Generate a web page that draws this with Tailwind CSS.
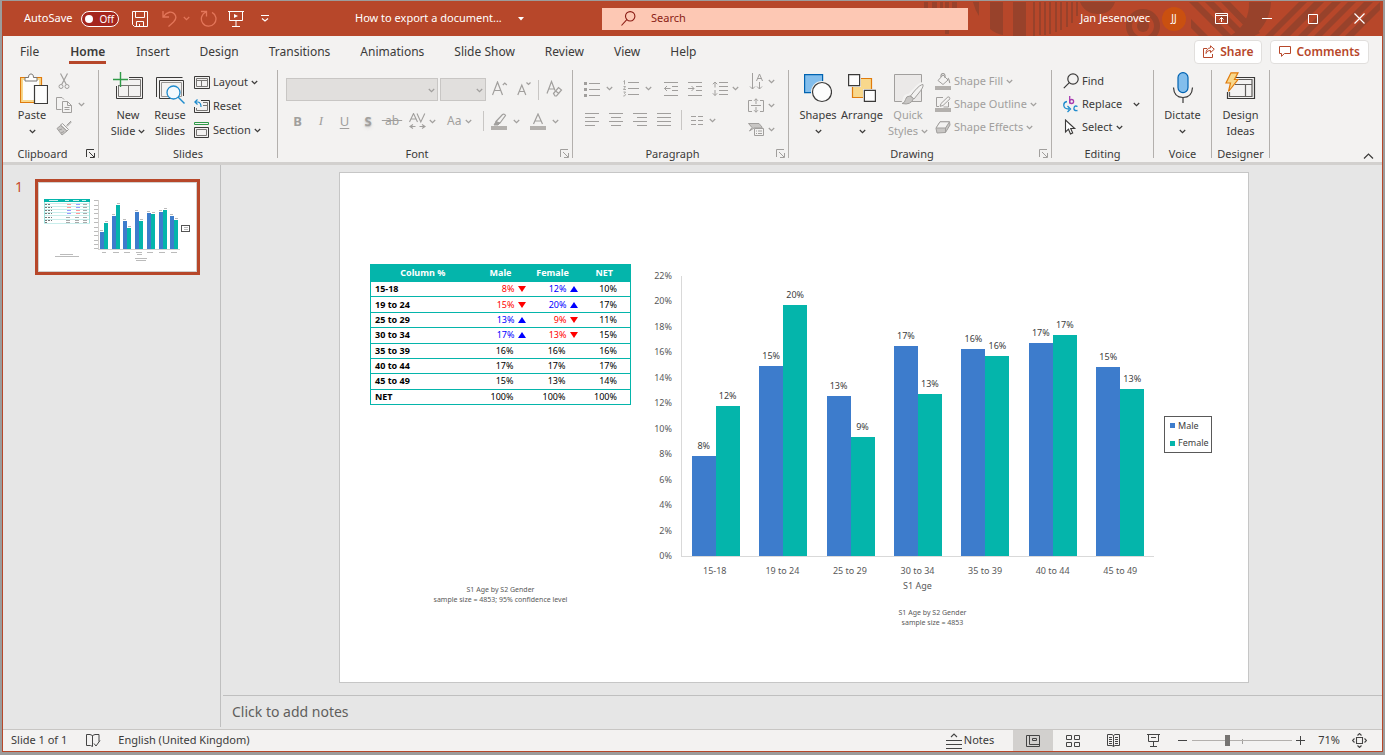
<!DOCTYPE html>
<html lang="en">

<head>
    <meta charset="UTF-8" />
    <meta name="viewport" content="width=device-width, initial-scale=1" />
    <title>How to export a document... - PowerPoint</title>
    <script src="https://cdn.jsdelivr.net/npm/@tailwindcss/browser@4"></script>
</head>

<body class="h-screen overflow-hidden bg-[#9c9c9c] pt-px px-[2px] pb-[3px] flex flex-col font-['Noto_Sans',sans-serif] text-[11px] text-[#3b3a39]">

    <!-- shared icons -->
    <svg class="hidden">
        <symbol id="chev" viewBox="0 0 7 5"><path d="M.8 1l2.7 2.7L6.2 1" fill="none" stroke="currentColor" stroke-width="1.2" /></symbol>
        <symbol id="launcher" viewBox="0 0 9 9"><path d="M.5 8V.5H8M3 3l5 5M8.500 4v4.500H4" fill="none" stroke="currentColor" /></symbol>
    </svg>

    <div class="flex-1 min-h-0 flex flex-col border-x border-b border-[#b7472a] bg-[#f3f2f1]">

        <!-- title bar -->
        <header class="relative h-[35px] shrink-0 flex items-center bg-[#b7472a] text-white">
            <svg class="absolute right-0 top-0" width="458" height="35" viewBox="0 0 458 35" fill="#98422b">
                <path d="M0 1h4v8H0zM8 1h5v8H8zM16 1h3v8h-3zM21 1h4v32h-4zM28 1h5v8h-5zM49 1h6v14q-4-6-6-14zM66 1h13v33q-7-1-13-6zM89 1h13v34H89zM109 1h2v34h-2zM115 1h2v33h-2zM120 1h2v33h-2zM125 1h2v32h-2zM131 1h2v30h-2zM136 1h2v28h-2zM142 1h2v25h-2zM147 1h2v21h-2zM152 1h2v14h-2z" />
                <path d="M156 1h35q-4 12-17 12T156 1z" />
                <path d="M265 1h9l34 34h-9zM281 1h9l34 34h-9zM297 1h9l30 31-6 3zM267 18l17 17h-9l-8-8z" />
                <path d="M325 1h22q-1 20-17 34h-24q20-12 19-34z" />
                <path d="M375 1h8l-34 34h-8zM390 1h10l-34 34h-10zM408 1h9l-34 34h-9zM424 1h8l-34 34h-8zM440 1h9l-34 34h-9zM456 1v8l-26 26h-9z" />
                <circle cx="219" cy="25" r="14" fill="none" stroke="#98422b" stroke-width="6" />
                <circle cx="219" cy="25" r="6" />
            </svg>

            <div class="relative w-[352px] shrink-0 flex items-center pl-[21px]">
                <label class="flex items-center gap-[9px]">
                    <span>AutoSave</span>
                    <input type="checkbox" role="switch" class="sr-only" />
                    <span class="w-[38px] h-4 rounded-full border border-white bg-[#a5261d] flex items-center pl-[3px] gap-[6px] text-[10px] leading-none">
                        <span class="size-2 rounded-full bg-white"></span>Off
                    </span>
                </label>
                <button class="ml-[13px]" aria-label="Save">
                    <svg width="16" height="16" viewBox="0 0 16 16" fill="none" stroke="#fff"><path d="M.5.5h15v15H2.500l-2-2zM3.500.5v6h9v-6M4.500 15.500v-5h7v5M7.500 15v-2" /></svg>
                </button>
                <button class="ml-[14px] flex items-center gap-[6px] text-[#e3765a]" aria-label="Undo">
                    <svg width="15" height="17" viewBox="0 0 15 17" fill="none" stroke="currentColor" stroke-width="1.300"><path d="M1 1v6h6M1.500 6.500C5 1.500 10 1 12.500 4s1 6-1 8l-5 4.500" /></svg>
                    <svg width="7" height="5"><use href="#chev" /></svg>
                </button>
                <button class="ml-[10px] text-[#e3765a]" aria-label="Redo">
                    <svg width="17" height="17" viewBox="0 0 17 17" fill="none" stroke="currentColor" stroke-width="1.300"><path d="M1 1.500h5.500v5M6 2A7.300 7.300 0 1 0 12 2.300" /></svg>
                </button>
                <button class="ml-[11px]" aria-label="Start from beginning">
                    <svg width="16" height="16" viewBox="0 0 16 16" fill="none" stroke="#fff"><path d="M0 .5h16M1.500 1v8.500h13V1M8 10v5M4 15.500h8" /><path d="M6 3l4 2-4 2z" fill="#fff" stroke="none" /></svg>
                </button>
                <button class="ml-[17px]" aria-label="Customize toolbar">
                    <svg width="8" height="7" viewBox="0 0 8 7" fill="none" stroke="#fff"><path d="M0 .5h8M1 3.500l3 2.500 3-2.500" stroke-width="1.200" /></svg>
                </button>
            </div>

            <button class="relative w-[247px] shrink-0 flex items-center gap-[16px]">
                How to export a document...
                <svg width="6" height="4" viewBox="0 0 6 4" fill="#fff"><path d="M0 0h6L3 3.500z" /></svg>
            </button>

            <div class="relative flex-1 h-[22px] bg-[#fdc8b4] flex items-center pl-[19px] gap-[15px] text-[#8a1c14]">
                <svg width="15" height="15" viewBox="0 0 15 15" fill="none" stroke="currentColor" stroke-width="1.100"><circle cx="9.200" cy="5.300" r="4.700" /><path d="M5.800 8.700L.5 14.500" /></svg>
                <input type="text" aria-label="Search" placeholder="Search" class="flex-1 min-w-0 bg-transparent outline-none placeholder:text-[#8a1c14]" />
            </div>

            <div class="relative w-[414px] shrink-0 flex items-center justify-end">
                <span>Jan Jesenovec</span>
                <span class="mx-[12px] size-6 rounded-full bg-[#ca5010] flex items-center justify-center text-[10px]">JJ</span>
                <button class="w-[46px] flex justify-center" aria-label="Ribbon display options">
                    <svg width="13" height="11" viewBox="0 0 13 11" fill="none" stroke="#fff"><path d="M.5.5h12v10H.5zM1 2.500h11M6.500 9V4.500M4.500 6.500l2-2 2 2" /></svg>
                </button>
                <button class="w-[46px] flex justify-center" aria-label="Minimize">
                    <svg width="10" height="11" viewBox="0 0 10 11" stroke="#fff"><path d="M0 5.500h10" /></svg>
                </button>
                <button class="w-[46px] flex justify-center" aria-label="Maximize">
                    <svg width="10" height="10" viewBox="0 0 10 10" stroke="#fff" fill="none"><path d="M.5.5h9v9h-9z" /></svg>
                </button>
                <button class="w-[46px] flex justify-center" aria-label="Close">
                    <svg width="11" height="11" viewBox="0 0 11 11" stroke="#fff" fill="none" stroke-width="1.200"><path d="M.5.5l10 10M10.500.5l-10 10" /></svg>
                </button>
            </div>
        </header>

        <!-- tabs -->
        <nav class="h-[31px] shrink-0 flex items-center justify-between pl-[17px] pr-[13px] text-xs">
            <div class="flex gap-[30px] leading-5">
                <a href="#">File</a>
                <a href="#" class="relative px-px font-semibold">Home<span class="absolute inset-x-0 bottom-[-2px] h-[3px] bg-[#b7472a]"></span></a>
                <a href="#">Insert</a>
                <a href="#">Design</a>
                <a href="#">Transitions</a>
                <a href="#">Animations</a>
                <a href="#">Slide Show</a>
                <a href="#">Review</a>
                <a href="#">View</a>
                <a href="#">Help</a>
            </div>
            <div class="flex gap-2 font-semibold text-[#b7472a]">
                <button class="h-6 px-2 flex items-center gap-[5px] bg-white border border-[#e1dfdd] rounded-sm">
                    <svg width="12" height="13" viewBox="0 0 12 13" fill="none" stroke="currentColor"><path d="M4 3.500H.5v9h9V9M7.500.8l3.800 3.400-3.800 3.400V5.500C5 5.500 4 6.500 3 8.500c0-3 1.500-5.500 4.500-5.700z" /></svg>
                    Share
                </button>
                <button class="h-6 px-2 flex items-center gap-[5px] bg-white border border-[#e1dfdd] rounded-sm">
                    <svg width="12" height="11" viewBox="0 0 12 11" fill="none" stroke="currentColor"><path d="M.5.500h11v7H5.500l-3 2.800V7.500h-2z" /></svg>
                    Comments
                </button>
            </div>
        </nav>

        <!-- ribbon -->
        <div class="relative h-[95px] shrink-0 pt-[3px] pb-1 flex leading-4">

            <section class="relative w-[96px] shrink-0 border-r border-[#b3b0ad] flex flex-col justify-between">
                <div class="flex pl-[12px] gap-[7px]">
                    <button class="w-[34px] flex flex-col items-center">
                        <span class="h-[37px] flex items-center pl-[4px]">
                            <svg width="28" height="31" viewBox="0 0 28 31" fill="none"><path d="M.5 4.500h21v25H.5z" fill="#f8d88c" stroke="#e07b0c" stroke-width="1.200" /><path d="M3 7h16v20H3z" fill="#fdfdfd" /><path d="M5 8V4.500h3.500C8.500 2 9.500 1 11 1s2.500 1 2.500 3.500H17V8z" fill="#fdfdfd" stroke="#797775" /><path d="M14.500 12.500h13v18h-13z" fill="#fdfdfd" stroke="#3b3a39" stroke-width="1.200" /></svg>
                        </span>
                        Paste
                        <span class="h-4 flex items-center"><svg width="7" height="5"><use href="#chev" /></svg></span>
                    </button>
                    <div class="flex flex-col text-[#a19f9d]">
                        <button class="h-[23px] w-4 flex items-center justify-center" aria-label="Cut">
                            <svg width="12" height="17" viewBox="0 0 12 17" fill="none" stroke="currentColor"><path d="M2.500.5l5.800 11M9.500.5L3.700 11.500" stroke-width="1.200" /><circle cx="3" cy="13.500" r="2" /><circle cx="9" cy="13.500" r="2" /></svg>
                        </button>
                        <button class="h-[23px] flex items-center gap-[6px]" aria-label="Copy">
                            <svg width="16" height="16" viewBox="0 0 16 16" fill="none" stroke="currentColor"><path d="M5.500 12.500h-5v-12h5.500l2 2M6.500 4.500h5l4 4v7h-9zM11.500 4.500v4h4M8.500 10.500h5M8.500 12.500h5" /></svg>
                            <svg width="7" height="5"><use href="#chev" /></svg>
                        </button>
                        <button class="h-[23px] flex items-center" aria-label="Format painter">
                            <svg width="16" height="16" viewBox="0 0 16 16" fill="none" stroke="currentColor"><path d="M15 1l-4.500 4.500M15.500 1.800L11 6.500" /><path d="M6.500 3.500l6 6-1.500 1.500-6.500-6z" /><path d="M4.500 5.500L1 8.500l5 6.500 5-4z" fill="#c8c6c4" /><path d="M3 10l3-1M5 13l3-1.500" /></svg>
                        </button>
                    </div>
                </div>
                <span class="pr-[16px] text-center leading-[8px]">Clipboard</span>
                <button class="absolute right-[3px] bottom-0" aria-label="Clipboard options"><svg width="9" height="9"><use href="#launcher" /></svg></button>
            </section>

            <section class="w-[179px] shrink-0 border-r border-[#b3b0ad] flex flex-col justify-between">
                <div class="flex pl-[10px]">
                    <button class="w-[38px] flex flex-col items-center whitespace-nowrap">
                        <span class="h-[37px] pt-[2px]">
                            <svg width="31" height="28" viewBox="0 0 31 28" fill="none" stroke="#3b3a39"><path d="M16 5.500h13.500v21h-26V14" /><path d="M5.500 13v11.500h22v-17H16M5.500 13.500h22M15.500 13.500v11" stroke="#797775" /><path d="M7.500 0v15M0 7.500h15" stroke="#2e9a47" stroke-width="1.400" /></svg>
                        </span>
                        New
                        <span class="flex items-center gap-[3px]">Slide <svg width="7" height="5"><use href="#chev" /></svg></span>
                    </button>
                    <button class="ml-1 w-[38px] flex flex-col items-center">
                        <span class="h-[37px] pt-[6px]">
                            <svg width="31" height="28" viewBox="0 0 31 28" fill="none"><path d="M1.500 21V1.500h26" stroke="#3b3a39" /><path d="M20 22.500H4.500v-18h24V20" stroke="#3b3a39" /><path d="M6.500 6.500h20v14h-20z" stroke="#979593" /><circle cx="18.500" cy="16.500" r="6.500" fill="#f3f9fd" stroke="#1e8bcd" stroke-width="1.300" /><path d="M23 21l6.500 6.500" stroke="#1e8bcd" stroke-width="1.400" /></svg>
                        </span>
                        Reuse<span>Slides</span>
                    </button>
                    <div class="ml-[5px] flex flex-col">
                        <button class="h-6 flex items-center gap-[3px]">
                            <svg width="16" height="13" viewBox="0 0 16 13" fill="none" stroke="#3b3a39"><path d="M.5.5h15v12H.5z" /><path d="M2.500 2.500h11v8h-11zM2.500 4.500h11M7.500 4.500v6" stroke="#797775" /></svg>
                            Layout <svg width="7" height="5"><use href="#chev" /></svg>
                        </button>
                        <button class="h-6 flex items-center gap-[3px]">
                            <svg width="16" height="14" viewBox="0 0 16 14" fill="none" stroke="#3b3a39"><path d="M7 1.500h8.500v12H.5V8" /><path d="M9 3.500h4.500v8h-11V9M9 6.500h4" stroke="#797775" /><path d="M3.500.5L.8 3l2.700 2.500M1 3h3q3 .5 3 5" stroke="#1e8bcd" stroke-width="1.200" /></svg>
                            Reset
                        </button>
                        <button class="h-6 flex items-center gap-[3px]">
                            <svg width="16" height="16" viewBox="0 0 16 16" fill="none"><path d="M.5.5h14v2H.5z" stroke="#2e9a47" /><path d="M.5 5.500h14v10H.5z" stroke="#3b3a39" /><path d="M2.500 7.500h10v6h-10z" stroke="#797775" /></svg>
                            Section <svg width="7" height="5"><use href="#chev" /></svg>
                        </button>
                    </div>
                </div>
                <span class="text-center leading-[8px]">Slides</span>
            </section>

            <section class="relative w-[295px] shrink-0 border-r border-[#b3b0ad] flex flex-col justify-between">
                <div class="pl-[8px] pt-[8px] flex flex-col gap-2 text-[#a19f9d]">
                    <div class="flex items-center h-[23px]">
                        <div class="relative w-[152px]">
                            <select aria-label="Font" class="block w-full h-[23px] appearance-none bg-[#e1dfdd] border border-[#c8c6c4]"></select>
                            <svg class="absolute right-[3px] top-[10px]" width="7" height="5"><use href="#chev" /></svg>
                        </div>
                        <div class="relative w-[46px] ml-[2px]">
                            <select aria-label="Font size" class="block w-full h-[23px] appearance-none bg-[#e1dfdd] border border-[#c8c6c4]"></select>
                            <svg class="absolute right-[3px] top-[10px]" width="7" height="5"><use href="#chev" /></svg>
                        </div>
                        <button class="ml-[6px] pb-[2px]" aria-label="Increase font size"><svg width="16" height="15" viewBox="0 0 16 15" fill="none" stroke="currentColor" stroke-width="1.200"><path d="M.5 14L5.500 1l5 13M2.500 9.500h6M10.800 4l2-2 2 2" /></svg></button>
                        <button class="ml-[9px] pb-[2px]" aria-label="Decrease font size"><svg width="16" height="15" viewBox="0 0 16 15" fill="none" stroke="currentColor" stroke-width="1.200"><path d="M.8 14l4-10 4 10M2.300 10.500h5M9.500 1.500l2 2 2-2" /></svg></button>
                        <span class="ml-[5px] w-px h-5 bg-[#c8c6c4]"></span>
                        <button class="ml-[7px] pb-[2px]" aria-label="Clear formatting"><svg width="17" height="17" viewBox="0 0 17 17" fill="none" stroke="currentColor" stroke-width="1.200"><path d="M1 13.500L5.500 1.500l3.500 9M3 9h5" /><path d="M7.500 13.500l5-6 3 2.500-5 6H9z" /><path d="M9.500 11l3.500 2.500" /></svg></button>
                    </div>
                    <div class="flex items-center h-6 text-[13px]">
                        <button class="w-[23px] font-bold">B</button>
                        <button class="w-6 italic font-['Liberation_Serif',serif]">I</button>
                        <button class="w-[23px] underline underline-offset-2">U</button>
                        <button class="w-6 font-bold text-shadow-md">S</button>
                        <button class="w-6 flex justify-center text-[12px]"><s class="whitespace-pre">&nbsp;ab&nbsp;</s></button>
                        <button class="ml-[5px] flex items-center gap-[3px]" aria-label="Character spacing">
                            <svg width="17" height="16" viewBox="0 0 17 16" fill="none" stroke="currentColor" stroke-width="1.100"><path d="M.5 9L4.500.500l4 8.500M2 6h5M8 .5L11.800 9l4-8.500M4 11.500L1 13.500l3 2M1 13.500h5.500M13 11.500l3 2-3 2M16 13.500h-5.500" /></svg>
                            <svg width="7" height="5"><use href="#chev" /></svg>
                        </button>
                        <button class="ml-[11px] flex items-center gap-1 text-[12px]">Aa <svg width="7" height="5"><use href="#chev" /></svg></button>
                        <span class="ml-[11px] w-px h-5 bg-[#c8c6c4]"></span>
                        <button class="ml-[7px] flex items-center gap-[6px]" aria-label="Highlight colour">
                            <svg width="16" height="17" viewBox="0 0 16 17" fill="none" stroke="currentColor"><path d="M5 8.500L11.500 1.500q2-1 3 1L9 10H6z" stroke-width="1.200" /><path d="M5 8.500L3 12h4l2-2z" fill="currentColor" /><path d="M0 13h16v4H0z" fill="#b3b0ad" stroke="none" /></svg>
                            <svg width="7" height="5"><use href="#chev" /></svg>
                        </button>
                        <button class="ml-[10px] flex items-center gap-[6px]" aria-label="Font colour">
                            <svg width="16" height="17" viewBox="0 0 16 17" fill="none" stroke="currentColor"><path d="M3.500 11L8 1l4.500 10M5 8h6" stroke-width="1.200" /><path d="M0 13h16v4H0z" fill="#b3b0ad" stroke="none" /></svg>
                            <svg width="7" height="5"><use href="#chev" /></svg>
                        </button>
                    </div>
                </div>
                <span class="pr-[16px] text-center leading-[8px]">Font</span>
                <button class="absolute right-[3px] bottom-0 text-[#a19f9d]" aria-label="Font options"><svg width="9" height="9"><use href="#launcher" /></svg></button>
            </section>

            <section class="relative w-[216px] shrink-0 border-r border-[#b3b0ad] flex flex-col justify-between">
                <div class="pl-[11px] flex justify-between pr-[13px] text-[#a19f9d]">
                    <div class="flex flex-col pt-[7px] gap-2">
                        <div class="h-[23px] flex items-center">
                            <button class="flex items-center gap-[6px]" aria-label="Bullets">
                                <svg width="16" height="16" viewBox="0 0 16 16" fill="none" stroke="currentColor"><path d="M5 2.500h11M5 8.500h11M5 14.500h11" /><path d="M0 2.500h3M0 8.500h3M0 14.500h3" stroke-width="3" /></svg>
                                <svg width="7" height="5"><use href="#chev" /></svg>
                            </button>
                            <button class="ml-[10px] flex items-center gap-[6px]" aria-label="Numbering">
                                <svg width="16" height="17" viewBox="0 0 16 17" fill="none" stroke="currentColor"><path d="M5 2.500h11M5 8.500h11M5 14.500h11" /><path d="M.5 1.500L1.500.5v4M.5 6.500h2L.5 9.500h2.500M.5 12h2l-1 1.500q2 1 0 2.500H.3" stroke-width=".9" /></svg>
                                <svg width="7" height="5"><use href="#chev" /></svg>
                            </button>
                            <button class="ml-[12px]" aria-label="Decrease indent">
                                <svg width="15" height="14" viewBox="0 0 15 14" fill="none" stroke="currentColor"><path d="M0 .5h14M8 4.500h6M8 8.500h6M0 13.500h14M6.500 6.500h-6M3 4L.5 6.500 3 9" /></svg>
                            </button>
                            <button class="ml-[9px]" aria-label="Increase indent">
                                <svg width="15" height="14" viewBox="0 0 15 14" fill="none" stroke="currentColor"><path d="M0 .5h14M8 4.500h6M8 8.500h6M0 13.500h14M0 6.500h6M3.500 4L6 6.500 3.500 9" /></svg>
                            </button>
                            <button class="ml-[9px] flex items-center gap-[3px]" aria-label="Line spacing">
                                <svg width="17" height="16" viewBox="0 0 17 16" fill="none" stroke="currentColor"><path d="M7 1.500h9M7 5.500h9M7 9.500h9M7 13.500h9M3 1v5.500M.8 3.200L3 1l2.200 2.200M3 9v5.500M.8 12.300L3 14.500l2.200-2.200" /></svg>
                                <svg width="7" height="5"><use href="#chev" /></svg>
                            </button>
                        </div>
                        <div class="h-6 flex items-center gap-[10px] pl-px">
                            <button aria-label="Align left"><svg width="14" height="14" viewBox="0 0 14 14" stroke="currentColor"><path d="M0 .5h14M0 4.500h10M0 8.500h14M0 12.500h10" /></svg></button>
                            <button aria-label="Centre"><svg width="14" height="14" viewBox="0 0 14 14" stroke="currentColor"><path d="M0 .5h14M2 4.500h10M0 8.500h14M2 12.500h10" /></svg></button>
                            <button aria-label="Align right"><svg width="14" height="14" viewBox="0 0 14 14" stroke="currentColor"><path d="M0 .5h14M4 4.500h10M0 8.500h14M4 12.500h10" /></svg></button>
                            <button aria-label="Justify"><svg width="14" height="14" viewBox="0 0 14 14" stroke="currentColor"><path d="M0 .5h14M0 4.500h14M0 8.500h14M0 12.500h14" /></svg></button>
                            <div class="flex items-center gap-[9px]">
                                <span class="w-px h-5 bg-[#c8c6c4]"></span>
                                <button class="flex items-center gap-[6px]" aria-label="Columns">
                                    <svg width="12" height="9" viewBox="0 0 12 9" stroke="currentColor"><path d="M0 .5h5M7 .5h5M0 4.500h5M7 4.500h5M0 8.500h5M7 8.500h5" /></svg>
                                    <svg width="7" height="5"><use href="#chev" /></svg>
                                </button>
                            </div>
                        </div>
                    </div>
                    <div class="flex flex-col">
                        <button class="h-[23px] flex items-center gap-1" aria-label="Text direction">
                            <svg width="16" height="17" viewBox="0 0 16 17" fill="none" stroke="currentColor"><path d="M4.500 0v16M2 13.500l2.500 2.500L7 13.500M11.500 9v7M9 13.500l2.500 2.500 2.500-2.500M8.500 8L11.500 1l3 7M9.500 5.500h4" /></svg>
                            <svg width="7" height="5"><use href="#chev" /></svg>
                        </button>
                        <button class="h-6 flex items-center gap-1" aria-label="Align text">
                            <svg width="16" height="15" viewBox="0 0 16 15" fill="none" stroke="currentColor"><path d="M4 2.500H.5v11H4M12 2.500h3.500v11H12M3 7.500h10M8 .8V6M6 2.800L8 .8l2 2M8 9v5.200M6 12.200l2 2 2-2" /></svg>
                            <svg width="7" height="5"><use href="#chev" /></svg>
                        </button>
                        <button class="h-6 flex items-center gap-1" aria-label="Convert to SmartArt">
                            <svg width="16" height="13" viewBox="0 0 16 13" fill="none" stroke="currentColor"><path d="M.5.500H11L14 4v1H6L1.500 8 4 4.500z" fill="#c8c6c4" /><path d="M6.500 5.500h9v7h-9z" fill="#f3f2f1" /><path d="M8 8h1M10 8h4M8 10.500h1M10 10.500h4" /></svg>
                            <svg width="7" height="5"><use href="#chev" /></svg>
                        </button>
                    </div>
                </div>
                <span class="pr-[16px] text-center leading-[8px]">Paragraph</span>
                <button class="absolute right-[3px] bottom-0 text-[#a19f9d]" aria-label="Paragraph options"><svg width="9" height="9"><use href="#launcher" /></svg></button>
            </section>

            <section class="relative w-[263px] shrink-0 border-r border-[#b3b0ad] flex flex-col justify-between">
                <div class="pl-[8px] flex">
                    <button class="w-[42px] flex flex-col items-center">
                        <span class="h-[37px] pt-1"><svg width="28" height="29" viewBox="0 0 28 29" fill="none"><path d="M.6.6h18v18H.6z" fill="#83beec" stroke="#0063b1" stroke-width="1.200" /><circle cx="18" cy="18" r="11" fill="#f3f2f1" /><circle cx="18" cy="18" r="9.500" fill="#fdfdfd" stroke="#3b3a39" stroke-width="1.200" /></svg></span>
                        Shapes
                        <span class="h-4 flex items-center"><svg width="7" height="5"><use href="#chev" /></svg></span>
                    </button>
                    <button class="ml-[1px] w-[44px] flex flex-col items-center">
                        <span class="h-[37px] pt-1"><svg width="28" height="28" viewBox="0 0 28 28"><path d="M4.500 4.500h19v19h-19z" fill="#f8d88c" stroke="#e07b0c" stroke-width="1.200" /><path d="M0 0h13v13H0zM15 15h13v13H15z" fill="#f3f2f1" /><path d="M.6.6h11v11H.6zM16.400 16.400h11v11h-11z" fill="#fdfdfd" stroke="#3b3a39" stroke-width="1.200" /></svg></span>
                        Arrange
                        <span class="h-4 flex items-center"><svg width="7" height="5"><use href="#chev" /></svg></span>
                    </button>
                    <button class="ml-[3px] w-[42px] flex flex-col items-center text-[#a19f9d] whitespace-nowrap">
                        <span class="h-[37px] pt-1"><svg width="31" height="31" viewBox="0 0 31 31" fill="none" stroke="currentColor"><path d="M1.500.5h27v27h-27z" fill="#ebe9e8" /><path d="M30 10.500q-3 0-8.500 6.500l-4.500 5q-4.500 0-5 4t-3.500 3.500" stroke="#f3f2f1" stroke-width="5" /><path d="M30 10.500q-3 0-8.500 6.500l-4 5 3.500 3 4-5q6-7 5-9.500z" fill="#f3f2f1" /><path d="M17 22q-4 0-4.500 3.500T9 29.500q9 2 11.500-5z" fill="#c8c6c4" /></svg></span>
                        Quick
                        <span class="flex items-center gap-[3px]">Styles <svg width="7" height="5"><use href="#chev" /></svg></span>
                    </button>
                    <div class="ml-[6px] flex flex-col text-[#a19f9d]">
                        <button class="h-[22px] flex items-center gap-[3px]">
                            <svg width="16" height="17" viewBox="0 0 16 17" fill="none" stroke="currentColor"><path d="M3 7.500l5-5.500 5 5-5 4.500z" /><path d="M6 4V2.500q.5-2 2-2t2 2V5M13 5q2 3 1.500 5" stroke-width="1.200" /><path d="M0 13h16v4H0z" fill="#b3b0ad" stroke="none" /></svg>
                            Shape Fill <svg width="7" height="5"><use href="#chev" /></svg>
                        </button>
                        <button class="h-6 flex items-center gap-[3px]">
                            <svg width="16" height="16" viewBox="0 0 16 16" fill="none" stroke="currentColor"><path d="M8 1.500H1.500v9H4M13.500 6v5h-5" /><path d="M6 7.500L13 .8q2 0 2 2L8 9.500l-3 .8z" /><path d="M0 12h16v4H0z" fill="#b3b0ad" stroke="none" /></svg>
                            Shape Outline <svg width="7" height="5"><use href="#chev" /></svg>
                        </button>
                        <button class="h-[22px] flex items-center gap-[3px]">
                            <svg width="16" height="13" viewBox="0 0 16 13" fill="none" stroke="currentColor"><path d="M1 7.500L5 .8h9.500L15 4l-4.500 7.500-8.500.5z" fill="#c8c6c4" /><path d="M5 .8h9.500L10.500 7H1z" fill="#f3f2f1" /><path d="M10.500 7v4.500" /></svg>
                            Shape Effects <svg width="7" height="5"><use href="#chev" /></svg>
                        </button>
                    </div>
                </div>
                <span class="pr-[16px] text-center leading-[8px]">Drawing</span>
                <button class="absolute right-[3px] bottom-0 text-[#a19f9d]" aria-label="Drawing options"><svg width="9" height="9"><use href="#launcher" /></svg></button>
            </section>

            <section class="w-[102px] shrink-0 border-r border-[#b3b0ad] flex flex-col justify-between">
                <div class="pl-[11px] flex flex-col">
                    <button class="h-[22px] flex items-center gap-[3px]">
                        <svg width="16" height="16" viewBox="0 0 16 16" fill="none" stroke="#3b3a39" stroke-width="1.200"><circle cx="10" cy="6" r="5.200" /><path d="M6.300 9.700L.8 15.200" /></svg>
                        Find
                    </button>
                    <button class="h-6 flex items-center gap-[3px]">
                        <svg width="16" height="17" viewBox="0 0 16 17" fill="none" stroke-width="1.300"><path d="M6.700 0v7.500" stroke="#a73cb0" /><circle cx="8.600" cy="5.500" r="2" stroke="#a73cb0" /><path d="M14.500 10.500q-3-1.500-3.500 1.500t3.500 2.500M4 5.500Q.5 6 .8 9.500T6 13M4.500 10L7.500 13l-3 3" stroke="#1e8bcd" /></svg>
                        Replace <svg class="ml-[8px]" width="7" height="5"><use href="#chev" /></svg>
                    </button>
                    <button class="h-[22px] flex items-center gap-[3px]">
                        <svg width="16" height="16" viewBox="0 0 16 16" fill="none" stroke="#3b3a39" stroke-width="1.100"><path d="M2.500 1v12l3-2.800 2 4.800 2.200-1-2-4.500h4z" fill="#fdfdfd" /></svg>
                        Select <svg width="7" height="5"><use href="#chev" /></svg>
                    </button>
                </div>
                <span class="text-center leading-[8px]">Editing</span>
            </section>

            <section class="w-[58px] shrink-0 border-r border-[#b3b0ad] flex flex-col justify-between">
                <button class="flex flex-col items-center">
                    <span class="h-[37px] pt-[2px]"><svg width="22" height="32" viewBox="0 0 22 32" fill="none"><rect x="6" y=".6" width="10" height="20" rx="5" fill="#83beec" stroke="#0063b1" stroke-width="1.200" /><path d="M1.500 15.500q.5 10 9.500 10t9.500-10M11 25.500V31" stroke="#3b3a39" stroke-width="1.200" /></svg></span>
                    Dictate
                    <span class="h-4 flex items-center"><svg width="7" height="5"><use href="#chev" /></svg></span>
                </button>
                <span class="text-center leading-[8px]">Voice</span>
            </section>

            <section class="w-[58px] shrink-0 border-r border-[#b3b0ad] flex flex-col justify-between">
                <button class="flex flex-col items-center">
                    <span class="h-[37px] pt-[2px]"><svg width="31" height="28" viewBox="0 0 31 28" fill="none"><path d="M10 5.500h19.500v21h-27V20" stroke="#3b3a39" stroke-width="1.200" /><path d="M10 7.500h17v17H4.500V20M10 12.500h17M20.500 13v11" stroke="#605e5c" stroke-width="1.200" /><path d="M6 .8h7L9.500 7.500H13L3.500 19.500 5.500 11H1z" fill="#f8d88c" stroke="#e07b0c" stroke-width="1.200" /></svg></span>
                    Design<span>Ideas</span>
                </button>
                <span class="text-center leading-[8px]">Designer</span>
            </section>

            <button class="absolute right-[8px] bottom-[3px]" aria-label="Collapse ribbon">
                <svg width="11" height="6" viewBox="0 0 11 6" fill="none" stroke="currentColor" stroke-width="1.200"><path d="M1 5.500l4.500-4.500L10 5.500" /></svg>
            </button>
        </div>

        <!-- workspace -->
        <main class="flex-1 min-h-0 flex bg-[#e6e6e6] border-t-3 border-[#d2d0ce]">
            <aside class="w-[218px] shrink-0 border-r border-[#bfbfbf] mb-[2px] pt-[14px] pl-[12px] flex gap-[12px] items-start">
                <span class="text-[14px] leading-4 text-[#c8492c]">1</span>
                <a href="#" aria-label="Slide 1" class="block w-[165px] border-3 border-[#b7472a] bg-white">
                    <svg class="block w-full" viewBox="0 0 159 90" shape-rendering="crispEdges">
                        <path d="M.5.5h158v89H.5z" fill="none" stroke="#d2d0ce" />
                        <path d="M6 17h46v3H6z" fill="#04b5ab" />
                        <path d="M6 21.500h46M6 24.500h46M6 27.500h46M6 30.500h46M6 33.500h46M6 37.500h46M6 41.500h46" stroke="#c9eeec" />
                        <path d="M6.500 20v21M51.500 20v21" stroke="#9fe0dc" />
                        <path d="M11 18.500h9M27 18.500h4M35 18.500h6M44 18.500h4" stroke="#c8f0ed" />
                        <path d="M7 22.500h5M7 25.500h7M7 28.500h7M7 31.500h7M7 35.500h7M7 38.500h7M7 40.500h3" stroke="#777" stroke-dasharray="2 1" />
                        <path d="M29 22.500h4M29 25.500h4M38 28.500h4M38 31.500h4" stroke="#f99" />
                        <path d="M38 22.500h4M38 25.500h4M29 28.500h4M29 31.500h4" stroke="#99f" />
                        <path d="M45 22.500h4M45 25.500h4M45 28.500h4M45 31.500h4M28 35.500h4M37 35.500h4M45 35.500h4M28 38.500h4M37 38.500h4M45 38.500h4M28 40.500h4M37 40.500h4M45 40.500h4" stroke="#aaa" />
                        <path d="M56 18.500h4M56 23.500h4M56 27.500h4M56 31.500h4M56 36.500h4M56 40.500h4M56 45.500h4M56 49.500h4M56 53.500h4M56 58.500h4M56 62.500h4M56 66.500h4" stroke="#bbb" />
                        <path d="M60.500 18v49h81" fill="none" stroke="#d2d0ce" />
                        <g id="thumbBars"></g>
                        <path d="M64 70.500h4M75 70.500h6M86 70.500h6M98 70.500h6M109 70.500h6M121 70.500h6M133 70.500h6M99 72.500h5M97 76.500h12M98 78.500h10M22 72.500h13M17 74.500h24" stroke="#bbb" />
                        <path d="M143.500 43.500h8v6h-8z" fill="#fff" stroke="#555" />
                        <path d="M146 45.500h4M146 47.500h4" stroke="#bbb" />
                    </svg>
                </a>
            </aside>

            <div class="flex-1 min-w-0 flex flex-col">
                <div class="flex-1 min-h-0 pt-[7px] pl-[118px] pr-[133px]">
                    <!-- slide -->
                    <div class="bg-white border border-[#c6c6c6] h-[511px] pl-[30px] pr-[36px] flex">
                        <div class="w-[261px] shrink-0 pt-[91px]">
                            <table class="w-full h-[141px] table-fixed border border-[#04b5ab] text-[9px] leading-3 text-black">
                                <thead>
                                    <tr class="bg-[#04b5ab] text-white font-bold h-[17px]">
                                        <th class="w-[104px] p-0">Column %</th>
                                        <th class="p-0">Male</th>
                                        <th class="p-0">Female</th>
                                        <th class="p-0">NET</th>
                                    </tr>
                                </thead>
                                <tbody id="tableRows"></tbody>
                            </table>
                            <p class="mt-[180px] text-center text-[7px] leading-[10px] text-[#595959]">S1 Age by S2 Gender<br />sample size = 4853; 95% confidence level</p>
                        </div>

                        <div class="flex-1 ml-[22px] pt-[97px] text-[9px] leading-3 text-[#404040]">
                            <div class="flex">
                                <div id="yAxis" class="w-[19px] h-[292px] flex flex-col justify-between text-right text-[#595959]"></div>
                                <div class="flex-1 ml-[9px] pt-[6px]">
                                    <div id="bars" class="h-[281px] flex border-l border-b border-[#d9d9d9]"></div>
                                    <div id="xAxis" class="mt-2 flex text-center text-[#595959]"></div>
                                    <p class="mt-[3px] text-center text-[#595959]">S1 Age</p>
                                </div>
                                <div class="w-[48px] h-[37px] ml-[10px] mt-[146px] border border-[#595959] flex flex-col justify-around pl-[5px]">
                                    <span class="flex items-center gap-[3px]"><i class="size-[5px] bg-[#3d7ccc]"></i>Male</span>
                                    <span class="flex items-center gap-[3px]"><i class="size-[5px] bg-[#04b5ab]"></i>Female</span>
                                </div>
                            </div>
                            <p class="mt-[16px] text-center text-[7px] leading-[10px] text-[#595959]">S1 Age by S2 Gender<br />sample size = 4853</p>
                        </div>
                    </div>
                </div>
                <div class="ml-[2px] h-[34px] shrink-0 border-t border-[#bfbfbf] pl-[9px] pb-[2px] flex items-center text-[14px] text-[#605e5c]">Click to add notes</div>
            </div>
        </main>

        <!-- status bar -->
        <footer class="h-[22px] shrink-0 border-t border-[#c8c6c4] flex items-center pl-2 pr-[15px]">
            <span>Slide 1 of 1</span>
            <button class="ml-[19px]" aria-label="Spelling">
                <svg width="15" height="13" viewBox="0 0 15 13" fill="none" stroke="#444"><path d="M6.500 1.500L4 .5H.5v11h4l2 1V1.500L9 .5h4v7M8 9.500l2 2.500 4-5.500" /></svg>
            </button>
            <span class="ml-[17px]">English (United Kingdom)</span>
            <div class="ml-auto h-full flex items-center">
                <button class="flex items-center gap-[2px]">
                    <svg width="16" height="16" viewBox="0 0 16 16" fill="none" stroke="#444"><path d="M0 7.500h16M0 11.500h16M0 15.500h16M5 4l3-3 3 3" stroke-width="1.100" /></svg>
                    Notes
                </button>
                <div class="ml-[19px] h-full flex">
                    <button class="w-10 bg-[#d2d0ce] flex items-center justify-center" aria-label="Normal">
                        <svg width="14" height="12" viewBox="0 0 14 12" fill="none" stroke="#444"><path d="M.5.5h13v11H.5zM3.500 1v8.500M3.500 9.500H14M6.500 3.500h4v2h-4z" /></svg>
                    </button>
                    <button class="w-10 flex items-center justify-center" aria-label="Slide sorter">
                        <svg width="14" height="12" viewBox="0 0 14 12" fill="none" stroke="#444"><path d="M.5.5h5v4h-5zM8.500.5h5v4h-5zM.5 7.500h5v4h-5zM8.500 7.500h5v4h-5z" /></svg>
                    </button>
                    <button class="w-10 flex items-center justify-center" aria-label="Reading view">
                        <svg width="13" height="13" viewBox="0 0 13 13" fill="none" stroke="#444"><path d="M.5.500h4.500l1.500 1 1.500-1h4.500v11H8l-1.500 1-1.500-1H.5zM6.500 1.500v11M2 3.500h3M2 5.500h3M2 7.500h3M2 9.500h3M8 3.500h3M8 5.500h3M8 7.500h3M8 9.500h3" /></svg>
                    </button>
                    <button class="w-10 flex items-center justify-center" aria-label="Slide show">
                        <svg width="13" height="13" viewBox="0 0 13 13" fill="none" stroke="#444"><path d="M0 .5h13M1.500 1v6.500h10V1M4 3.500h5M6.500 8v4M3 12.500h7" /></svg>
                    </button>
                </div>
                <button class="ml-[5px]" aria-label="Zoom out"><svg width="9" height="9" viewBox="0 0 9 9" stroke="#444"><path d="M0 4.500h9" /></svg></button>
                <div class="relative ml-[5px] w-[100px] h-[14px] flex items-center">
                    <span class="absolute left-[50px] top-[5px] w-px h-[5px] bg-[#a19f9d]"></span>
                    <input type="range" aria-label="Zoom" min="10" max="186" value="71" class="relative w-full h-[14px] appearance-none bg-transparent [&::-webkit-slider-runnable-track]:h-px [&::-webkit-slider-runnable-track]:bg-[#b3b0ad] [&::-webkit-slider-thumb]:appearance-none [&::-webkit-slider-thumb]:w-[5px] [&::-webkit-slider-thumb]:h-[11px] [&::-webkit-slider-thumb]:mt-[-5px] [&::-webkit-slider-thumb]:bg-[#767472]" />
                </div>
                <button class="ml-1" aria-label="Zoom in"><svg width="9" height="9" viewBox="0 0 9 9" stroke="#444"><path d="M0 4.500h9M4.500 0v9" /></svg></button>
                <span class="ml-[13px]">71%</span>
                <button class="ml-[12px]" aria-label="Fit slide to window">
                    <svg width="15" height="15" viewBox="0 0 15 15" fill="none" stroke="#444"><path d="M4.500 4.500h6v6h-6zM5.500 2.500l2-2 2 2M5.500 12.500l2 2 2-2M2.500 5.500l-2 2 2 2M12.500 5.500l2 2-2 2" stroke-width="1.100" /></svg>
                </button>
            </div>
        </footer>
    </div>

    <script>
        const PLOT = 281;
        const data = [
            { age: '15-18', male: '8%', female: '12%', net: '10%', h: [100, 150], sig: ['down', 'up'] },
            { age: '19 to 24', male: '15%', female: '20%', net: '17%', h: [190, 251], sig: ['down', 'up'] },
            { age: '25 to 29', male: '13%', female: '9%', net: '11%', h: [160, 119], sig: ['up', 'down'] },
            { age: '30 to 34', male: '17%', female: '13%', net: '15%', h: [210, 162], sig: ['up', 'down'] },
            { age: '35 to 39', male: '16%', female: '16%', net: '16%', h: [207, 200] },
            { age: '40 to 44', male: '17%', female: '17%', net: '17%', h: [213, 221] },
            { age: '45 to 49', male: '15%', female: '13%', net: '14%', h: [189, 167] }
        ];

        const arrows = {
            up: '<svg class="inline-block ml-[3px] align-baseline" width="8" height="6" viewBox="0 0 8 6"><path d="M4 0l4 6H0z" fill="#00f"/></svg>',
            down: '<svg class="inline-block ml-[3px] align-baseline" width="8" height="6" viewBox="0 0 8 6"><path d="M0 0h8L4 6z" fill="#f00"/></svg>'
        };

        function cell(value, sig) {
            if (!sig) return `<td class="p-0 pr-[13px] text-right">${value}</td>`;
            const color = sig === 'up' ? 'text-[#00f]' : 'text-[#f00]';
            return `<td class="p-0 pr-px text-right whitespace-nowrap ${color}">${value}${arrows[sig]}</td>`;
        }

        const rows = data.concat({ age: 'NET', male: '100%', female: '100%', net: '100%' });
        document.getElementById('tableRows').innerHTML = rows.map(r => {
            const sig = r.sig || [];
            return `<tr class="border-t border-[#04b5ab]"><th class="p-0 pl-1 text-left font-bold">${r.age}</th>${cell(r.male, sig[0])}${cell(r.female, sig[1])}${cell(r.net)}</tr>`;
        }).join('');

        let ticks = '';
        for (let v = 22; v >= 0; v -= 2) ticks += `<span>${v}%</span>`;
        document.getElementById('yAxis').innerHTML = ticks;

        const bar = (label, h, color) =>
            `<div class="w-6 h-full flex flex-col justify-end items-center"><span class="mb-1">${label}</span><div class="w-full ${color}" style="height:${h}px"></div></div>`;

        document.getElementById('bars').innerHTML = data.map(d =>
            `<div class="flex-1 flex justify-center">${bar(d.male, d.h[0], 'bg-[#3d7ccc]')}${bar(d.female, d.h[1], 'bg-[#04b5ab]')}</div>`
        ).join('');
        document.getElementById('xAxis').innerHTML = data.map(d => `<span class="flex-1">${d.age}</span>`).join('');

        // slide preview uses the same bar heights, scaled down
        document.getElementById('thumbBars').innerHTML = data.map((d, i) => {
            const x = Math.round(62 + i * 11.7);
            const [m, f] = d.h.map(h => Math.round(h * 49 / PLOT));
            const label = (lx, h) => `<rect x="${lx}" y="${65 - h}" width="3" height="1" fill="#bbb"/>`;
            return `<rect x="${x}" y="${67 - m}" width="4" height="${m}" fill="#3d7ccc"/><rect x="${x + 4}" y="${67 - f}" width="4" height="${f}" fill="#04b5ab"/>` + label(x, m) + label(x + 5, f);
        }).join('');
    </script>
</body>

</html>
